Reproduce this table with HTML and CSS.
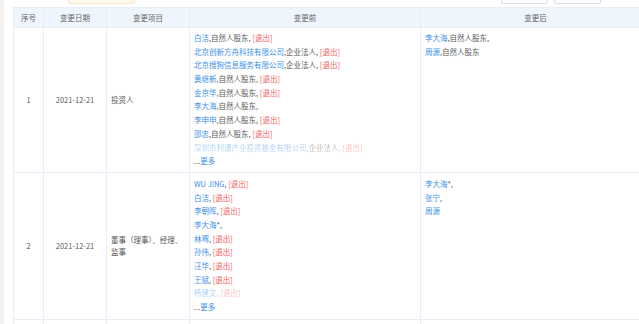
FILE: index.html
```html
<!DOCTYPE html>
<html lang="zh">
<head>
<meta charset="utf-8">
<link rel="stylesheet" href="styles.css">
</head>
<body>
<div class="page">
  <div class="strip"></div>
  <div class="main">
    <div class="topbar">
      <div class="notice"></div>
      <div class="spacer"></div>
      <div class="btn"></div>
      <div class="btn"></div>
    </div>
    <table class="grid">
      <colgroup>
        <col class="c1"><col class="c2"><col class="c3"><col class="c4"><col class="c5">
      </colgroup>
      <thead>
        <tr><th>序号</th><th>变更日期</th><th>变更项目</th><th>变更前</th><th>变更后</th></tr>
      </thead>
      <tbody>
        <tr>
          <td class="center">1</td>
          <td class="center">2021-12-21</td>
          <td class="item">投资人</td>
          <td class="list">
            <div class="ln"><span class="lk">白洁</span>,自然人股东, <span class="out">[退出]</span></div>
            <div class="ln"><span class="lk">北京创新方舟科技有限公司</span>,企业法人, <span class="out">[退出]</span></div>
            <div class="ln"><span class="lk">北京搜狗信息服务有限公司</span>,企业法人, <span class="out">[退出]</span></div>
            <div class="ln"><span class="lk">黄继新</span>,自然人股东, <span class="out">[退出]</span></div>
            <div class="ln"><span class="lk">金京华</span>,自然人股东, <span class="out">[退出]</span></div>
            <div class="ln"><span class="lk">李大海</span>,自然人股东,</div>
            <div class="ln"><span class="lk">李申申</span>,自然人股东, <span class="out">[退出]</span></div>
            <div class="ln"><span class="lk">邵忠</span>,自然人股东, <span class="out">[退出]</span></div>
            <div class="ln fade"><span class="lk">深圳市利通产业投资基金有限公司</span>,企业法人, <span class="out">[退出]</span></div>
            <div class="ln">...<span class="lk">更多</span></div>
          </td>
          <td class="list top">
            <div class="ln"><span class="lk">李大海</span>,自然人股东,</div>
            <div class="ln"><span class="lk">周源</span>,自然人股东</div>
          </td>
        </tr>
        <tr class="second">
          <td class="center">2</td>
          <td class="center">2021-12-21</td>
          <td class="item">董事（理事）、经理、监事</td>
          <td class="list">
            <div class="ln"><span class="lk">WU JING</span>, <span class="out">[退出]</span></div>
            <div class="ln"><span class="lk">白洁</span>, <span class="out">[退出]</span></div>
            <div class="ln"><span class="lk">李朝晖</span>, <span class="out">[退出]</span></div>
            <div class="ln"><span class="lk">李大海</span>*,</div>
            <div class="ln"><span class="lk">林骞</span>, <span class="out">[退出]</span></div>
            <div class="ln"><span class="lk">孙伟</span>, <span class="out">[退出]</span></div>
            <div class="ln"><span class="lk">汪华</span>, <span class="out">[退出]</span></div>
            <div class="ln"><span class="lk">王斌</span>, <span class="out">[退出]</span></div>
            <div class="ln fade"><span class="lk">杨建文</span>, <span class="out">[退出]</span></div>
            <div class="ln">...<span class="lk">更多</span></div>
          </td>
          <td class="list top">
            <div class="ln"><span class="lk">李大海</span>*,</div>
            <div class="ln"><span class="lk">张宁</span>,</div>
            <div class="ln"><span class="lk">周源</span></div>
          </td>
        </tr>
        <tr class="stub">
          <td></td><td></td><td></td><td></td><td></td>
        </tr>
      </tbody>
    </table>
  </div>
</div>
</body>
</html>
```

FILE: styles.css
```css
html, body {
  margin: 0;
  padding: 0;
  background: #fff;
  overflow: hidden;
}
body {
  font-family: "Noto Sans CJK SC", "Noto Sans", sans-serif;
  font-size: 7.5px;
  color: #595959;
}
.page {
  display: flex;
  height: 324px;
}
.strip {
  width: 4px;
  flex: none;
  background: #f2f2f3;
}
.main {
  padding-left: 9px;
  flex: none;
}
.topbar {
  height: 4px;
  display: flex;
  align-items: flex-end;
  overflow: hidden;
  margin-bottom: 3px;
}
.notice {
  margin-left: 55px;
  width: 67px;
  height: 16px;
  box-sizing: border-box;
  background: #fdf7ee;
  border: 1px solid #f8e6cc;
  border-radius: 2px;
}
.spacer {
  width: 366px;
}
.btn {
  width: 47px;
  height: 16px;
  box-sizing: border-box;
  border: 1px solid #dcdfe6;
  border-radius: 2px;
  background: #fff;
  margin-right: 6px;
}
.grid {
  border-collapse: collapse;
  table-layout: fixed;
  width: 637px;
}
.c1 { width: 30px; }
.c2 { width: 63px; }
.c3 { width: 83px; }
.c4 { width: 231px; }
.c5 { width: 230px; }
.grid th, .grid td {
  border: 1px solid #e6eef7;
}
.grid th {
  background: #eef5fc;
  height: 19px;
  padding: 0;
  font-weight: normal;
  color: #666;
  text-align: center;
  vertical-align: middle;
}
.grid td {
  padding: 0 4px;
  vertical-align: middle;
}
.grid td.center {
  text-align: center;
}
.grid td.item {
  line-height: 12px;
}
.grid td.list {
  padding: 3px 4px 4px;
  vertical-align: top;
}
.grid .second td.list {
  padding: 4px 4px 5px;
}
.ln {
  height: 13.7px;
  line-height: 13.7px;
  white-space: nowrap;
}
.lk {
  color: #3c8fea;
}
.out {
  color: #f26161;
}
.fade {
  -webkit-mask-image: linear-gradient(to bottom, rgba(0,0,0,0.55), rgba(0,0,0,0.25));
  mask-image: linear-gradient(to bottom, rgba(0,0,0,0.55), rgba(0,0,0,0.25));
}
.stub td {
  height: 20px;
}
```
